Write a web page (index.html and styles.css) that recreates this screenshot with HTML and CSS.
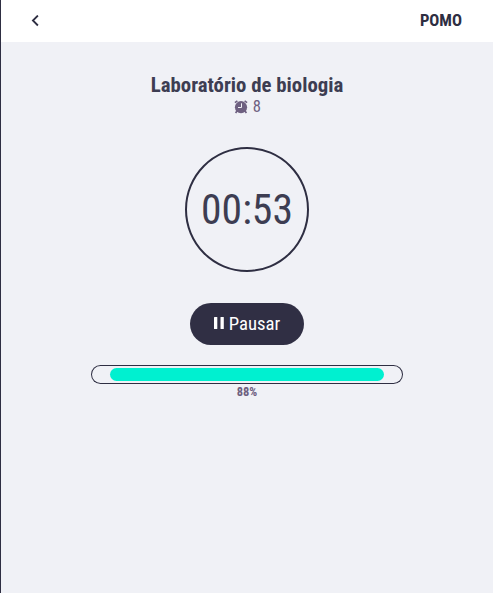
FILE: index.html
```html
<!DOCTYPE html>
<html lang="pt-BR"><head><meta charset="utf-8"><title>Pomo</title><link rel="stylesheet" href="styles.css"></head>
<body>
<header class="topbar">
<svg class="back" viewBox="0 0 8 12"><path d="M6.9 .5 1.9 5.5l5 5"/></svg>
<span class="brand">POMO</span>
</header>
<main class="content">
<h1 class="title"><span>Laboratório de biologia</span></h1>
<div class="count"><svg class="alarm" viewBox="0 0 14 14"><circle cx="7" cy="7.2" r="6.1"/><path class="ears" d="M.9 2.6 3.4.9M13.1 2.6 10.6.9M3 11 1.6 12.9M11 11l1.4 1.9"/><path class="hands" d="M7.5 3.3v4.2H4"/></svg><span>8</span></div>
<div class="timer"><span>00:53</span></div>
<button class="pause"><svg class="bars" viewBox="0 0 10 12"><rect width="3.3" height="12" rx=".5"/><rect x="6.5" width="3.3" height="12" rx=".5"/></svg><span>Pausar</span></button>
<div class="track"><div class="fill" style="width:88%"></div></div>
<div class="percent"><span>88%</span></div>
</main>
</body></html>
```
FILE: styles.css
```css
*{box-sizing:border-box}
body{margin:0;min-height:593px;background:#f0f1f6;border-left:1px solid #2e2e42;font-family:"Roboto Condensed",Roboto,sans-serif;font-stretch:condensed;color:#3d3d52}
.topbar{height:42px;background:#fff;display:flex;align-items:center;justify-content:space-between;padding:0 31px 2px 30px}
.back{width:8px;height:12px;margin-top:1px;fill:none;stroke:#2e2e42;stroke-width:1.8}
.brand{font-size:16.64px;font-weight:700;color:#2e2e42}
.content{display:flex;flex-direction:column;align-items:center}
.title{margin:31px 0 0;font-size:20.8px;line-height:24px;font-weight:700}
.count{display:flex;align-items:center;gap:4px;padding-left:1px;font-size:16.64px;line-height:19px;color:#6e6080}
.alarm{width:14px;height:14px;fill:currentColor}
.count span{margin-left:.5px}
.ears{fill:none;stroke:currentColor;stroke-width:1.7}
.hands{fill:none;stroke:#f0f1f6;stroke-width:1}
.timer{width:124px;height:125px;margin-top:31px;border:2px solid #2e2e42;border-radius:50%;display:flex;align-items:center;justify-content:center;font-size:41.6px}
.pause{margin-top:31px;padding:0;width:114px;height:42px;border:0;border-radius:21px;background:#302f44;color:#fff;font:inherit;font-stretch:condensed;font-size:18.72px;line-height:22px;display:flex;align-items:center;justify-content:center;gap:5px}
.bars{width:10px;height:12px;margin-bottom:2px;fill:#fff}
.track{margin-top:20px;width:312px;height:19px;box-shadow:inset 0 0 0 1px #2e2e42;border-radius:10px;display:flex;justify-content:center;align-items:center}
.fill{height:13px;border-radius:7px;background:#00f0d0}
.percent{font-size:12.48px;line-height:16px;font-weight:700;color:#6e6080}
```
